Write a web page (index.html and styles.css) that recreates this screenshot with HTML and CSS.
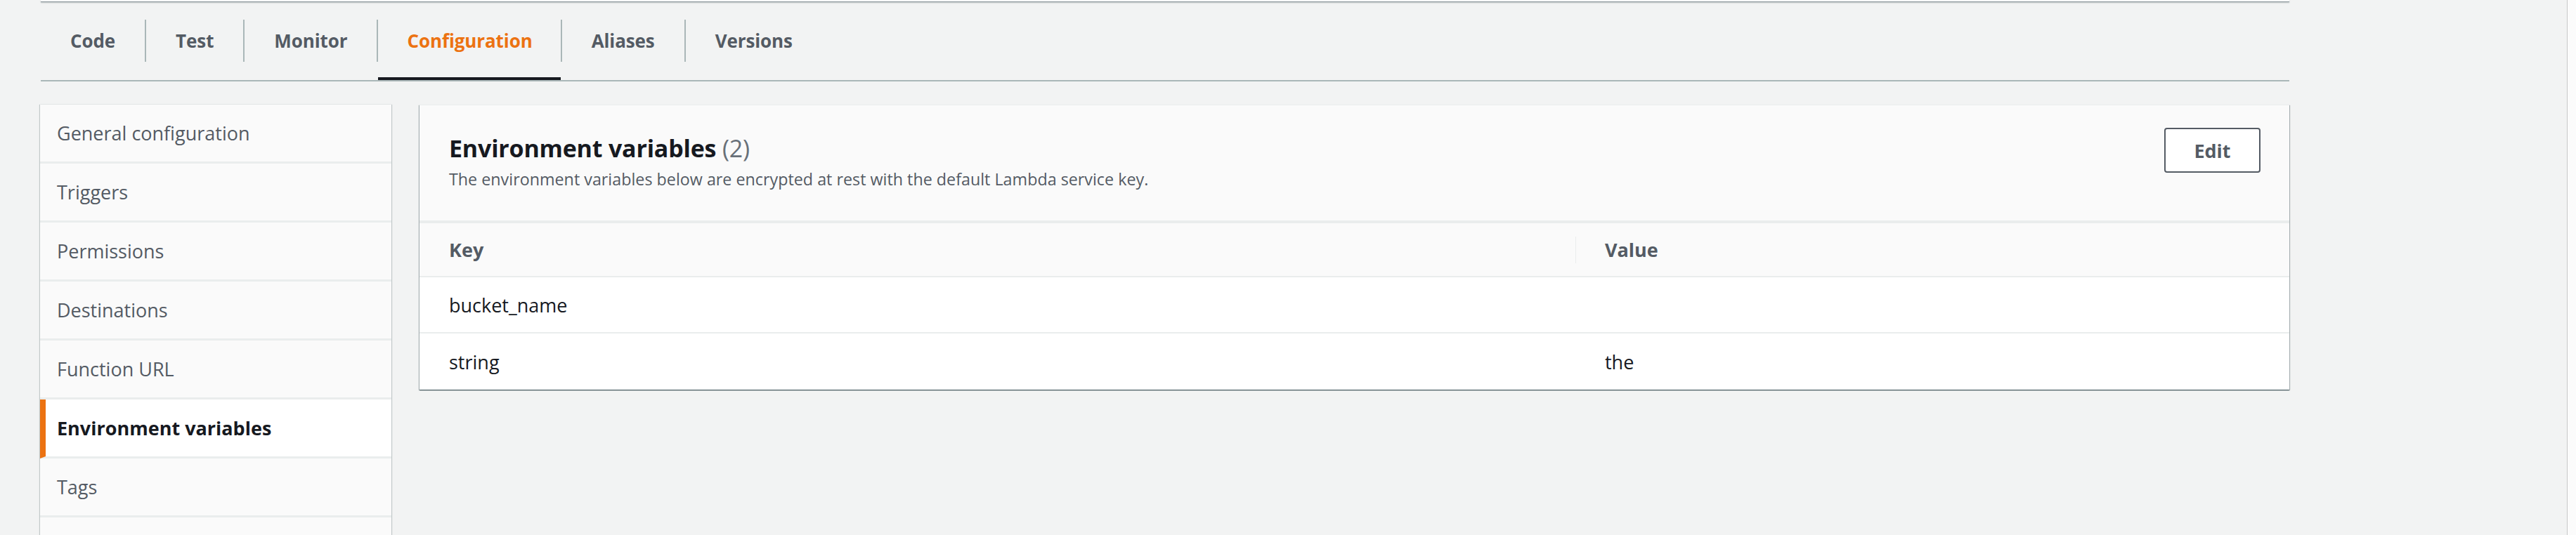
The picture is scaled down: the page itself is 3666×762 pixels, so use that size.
FILE: index.html
```html
<!DOCTYPE html>
<html lang="en">
<head>
<meta charset="utf-8">
<title>Lambda configuration</title>
<link rel="stylesheet" href="styles.css">
</head>
<body>
<div class="app">
  <div class="main">
    <div class="topcard"></div>
    <nav class="tabs">
      <div class="tab"><span class="tab-label">Code</span></div>
      <div class="sep"></div>
      <div class="tab"><span class="tab-label">Test</span></div>
      <div class="sep"></div>
      <div class="tab"><span class="tab-label">Monitor</span></div>
      <div class="sep"></div>
      <div class="tab tab-active"><span class="tab-label">Configuration</span></div>
      <div class="sep"></div>
      <div class="tab"><span class="tab-label">Aliases</span></div>
      <div class="sep"></div>
      <div class="tab"><span class="tab-label">Versions</span></div>
    </nav>
    <div class="content">
      <aside class="sidenav">
        <div class="nav-item">General configuration</div>
        <div class="nav-item">Triggers</div>
        <div class="nav-item">Permissions</div>
        <div class="nav-item">Destinations</div>
        <div class="nav-item">Function URL</div>
        <div class="nav-item nav-active">Environment variables</div>
        <div class="nav-item">Tags</div>
        <div class="nav-item nav-more"></div>
      </aside>
      <section class="panel">
        <header class="panel-header">
          <div class="panel-titles">
            <h2 class="panel-title">Environment variables <span class="count">(2)</span></h2>
            <p class="panel-desc">The environment variables below are encrypted at rest with the default Lambda service key.</p>
          </div>
          <button class="btn">Edit</button>
        </header>
        <div class="table">
          <div class="row row-head">
            <div class="cell cell-key">Key</div>
            <div class="cell cell-val"><span class="col-sep"></span>Value</div>
          </div>
          <div class="row">
            <div class="cell cell-key">bucket_name</div>
            <div class="cell cell-val"></div>
          </div>
          <div class="row row-last">
            <div class="cell cell-key">string</div>
            <div class="cell cell-val">the</div>
          </div>
        </div>
      </section>
    </div>
  </div>
  <div class="scrollbar"></div>
</div>
</body>
</html>
```

FILE: styles.css
```css
* { box-sizing: border-box; }

html, body {
  margin: 0;
  padding: 0;
  height: 100%;
  overflow: hidden;
}

body {
  background: #f2f3f3;
  font-family: "Open Sans", "Noto Sans", "Liberation Sans", sans-serif;
  color: #16191f;
}

.app {
  display: flex;
  height: 762px;
}

.main {
  flex: 0 0 3653px;
  padding-left: 58px;
}

.scrollbar {
  flex: 1;
  border-left: 1px solid #c8c8c8;
  background: #fbfbfb;
}

.topcard {
  width: 3200px;
  height: 3px;
  background: #ffffff;
  border-bottom: 1px solid #8d979b;
  box-shadow: 0 1px 2px rgba(0, 28, 36, 0.25);
}

/* Tabs */
.tabs {
  width: 3200px;
  display: flex;
  align-items: flex-start;
  padding-top: 25px;
  border-bottom: 2px solid #aab7b8;
}

.tab {
  height: 86px;
  padding: 0 42px;
  border-bottom: 4px solid transparent;
}

.tab-label {
  display: block;
  line-height: 60px;
  font-size: 26px;
  font-weight: 700;
  color: #545b64;
  letter-spacing: -0.1px;
}

.tab-active {
  border-bottom-color: #16191f;
  padding: 0 40px 0 41px;
}

.tab-active .tab-label {
  color: #ec7211;
}

.sep {
  width: 2px;
  height: 60px;
  background: #aab7b8;
  flex: 0 0 2px;
}

/* Content */
.content {
  width: 3200px;
  display: flex;
  align-items: flex-start;
  gap: 40px;
  margin-top: 33px;
}

.sidenav {
  flex: 0 0 500px;
  margin-left: -1px;
  background: #eaeded;
  box-shadow: -1px 0 1px rgba(0, 28, 36, 0.2), 1px 0 1px rgba(0, 28, 36, 0.2);
}

.nav-item {
  height: 84px;
  padding-left: 24px;
  background: #fafafa;
  border-bottom: 3px solid #eaeded;
  line-height: 81px;
  font-size: 27px;
  color: #545b64;
}

.nav-active {
  background: #ffffff;
  border-left: 8px solid #ec7211;
  padding-left: 16px;
  font-weight: 700;
  color: #16191f;
}

/* Panel */
.panel {
  flex: 1;
  background: #ffffff;
  border-top: 1px solid #eaeded;
  box-shadow: 0 1px 1px 0 rgba(0, 28, 36, 0.5), 1px 1px 1px 0 rgba(0, 28, 36, 0.25), -1px 1px 1px 0 rgba(0, 28, 36, 0.25);
}

.panel-header {
  display: flex;
  justify-content: space-between;
  align-items: flex-start;
  height: 168px;
  padding: 0 41px 0 42px;
  background: #fafafa;
  border-bottom: 4px solid #eaeded;
}

.panel-titles {
  padding-top: 37px;
}

.panel-title {
  margin: 0;
  font-size: 34px;
  line-height: 48px;
  font-weight: 700;
  color: #16191f;
  letter-spacing: -0.2px;
}

.count {
  font-weight: 400;
  color: #687078;
}

.panel-desc {
  margin: 4px 0 0;
  font-size: 23.3px;
  line-height: 32px;
  color: #545b64;
}

.btn {
  margin-top: 32px;
  width: 137px;
  height: 64px;
  background: #ffffff;
  border: 2px solid #545b64;
  border-radius: 4px;
  font-family: "Open Sans", "Noto Sans", "Liberation Sans", sans-serif;
  font-size: 27px;
  font-weight: 700;
  color: #545b64;
  padding: 0;
}

/* Table */
.row {
  display: flex;
  height: 80px;
  border-bottom: 2px solid #eaeded;
  background: #ffffff;
}

.row-head {
  height: 77px;
  background: #fafafa;
}

.row-last {
  border-bottom: none;
  height: 80px;
}

.cell {
  display: flex;
  align-items: center;
  font-size: 27px;
  color: #16191f;
}

.cell-key {
  flex: 0 0 1645px;
  padding-left: 42px;
}

.cell-val {
  flex: 1;
  padding-left: 42px;
  position: relative;
}

.row-head .cell {
  font-weight: 700;
  color: #545b64;
}

.col-sep {
  position: absolute;
  left: 0;
  top: 19px;
  width: 1px;
  height: 38px;
  background: #eaeded;
}
```
